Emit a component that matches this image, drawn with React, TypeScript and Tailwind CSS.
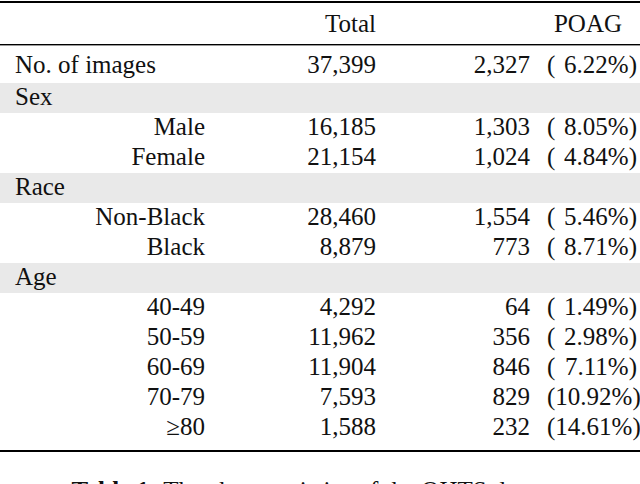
type Row = {
  label: string
  total?: string
  count?: string
  pct?: string
  kind: 'group' | 'sub'
}

const rows: Row[] = [
  { label: 'Sex', kind: 'group' },
  { label: 'Male', total: '16,185', count: '1,303', pct: '8.05', kind: 'sub' },
  { label: 'Female', total: '21,154', count: '1,024', pct: '4.84', kind: 'sub' },
  { label: 'Race', kind: 'group' },
  { label: 'Non-Black', total: '28,460', count: '1,554', pct: '5.46', kind: 'sub' },
  { label: 'Black', total: '8,879', count: '773', pct: '8.71', kind: 'sub' },
  { label: 'Age', kind: 'group' },
  { label: '40-49', total: '4,292', count: '64', pct: '1.49', kind: 'sub' },
  { label: '50-59', total: '11,962', count: '356', pct: '2.98', kind: 'sub' },
  { label: '60-69', total: '11,904', count: '846', pct: '7.11', kind: 'sub' },
  { label: '70-79', total: '7,593', count: '829', pct: '10.92', kind: 'sub' },
  { label: '\u226580', total: '1,588', count: '232', pct: '14.61', kind: 'sub' },
]

function Cells({ total, count, pct }: { total: string; count: string; pct: string }) {
  return (
    <>
      <div className="w-[171px] shrink-0 text-right">{total}</div>
      <div className="w-[154px] shrink-0 text-right">{count}</div>
      <div className="ml-[17px] flex w-[90px] shrink-0 whitespace-nowrap">
        <span>(</span>
        <span className="flex-1 text-right">{pct}%)</span>
      </div>
    </>
  )
}

export default function App() {
  return (
    <div className="w-[640px] h-[484px] overflow-hidden bg-white font-['Liberation_Serif'] text-[25px] text-[#111]">
      <div className="mt-[1px] h-[2px] bg-black" />

      {/* header */}
      <div className="flex h-[30px] mt-[7px] leading-[27px]">
        <div className="w-[205px] shrink-0" />
        <div className="w-[171px] shrink-0 text-right">Total</div>
        <div className="flex-1 pr-[18px] text-right">POAG</div>
      </div>
      <div className="mt-[4px] h-[1px] bg-black" />
      <div className="h-[1px] bg-[#9a9a9a]" />

      <div className="mt-[5px] flex h-[32px] leading-[27px]">
        <div className="w-[205px] shrink-0 pl-[15px] whitespace-nowrap">No. of images</div>
        <Cells total="37,399" count="2,327" pct="6.22" />
      </div>

      {rows.map((r) =>
        r.kind === 'group' ? (
          <div key={r.label} className="h-[30px] bg-[#e9e9e9] pl-[15px] leading-[27px]">
            {r.label}
          </div>
        ) : (
          <div key={r.label} className="flex h-[30px] leading-[27px]">
            <div className="w-[205px] shrink-0 text-right">{r.label}</div>
            <Cells total={r.total!} count={r.count!} pct={r.pct!} />
          </div>
        )
      )}

      <div className="mt-[7px] h-[2px] bg-black" />

      <p className="mt-[25px] text-center leading-[27px]">
        <span className="font-bold">Table 1:</span> The characteristics of the OHTS dataset.
      </p>
    </div>
  )
}
